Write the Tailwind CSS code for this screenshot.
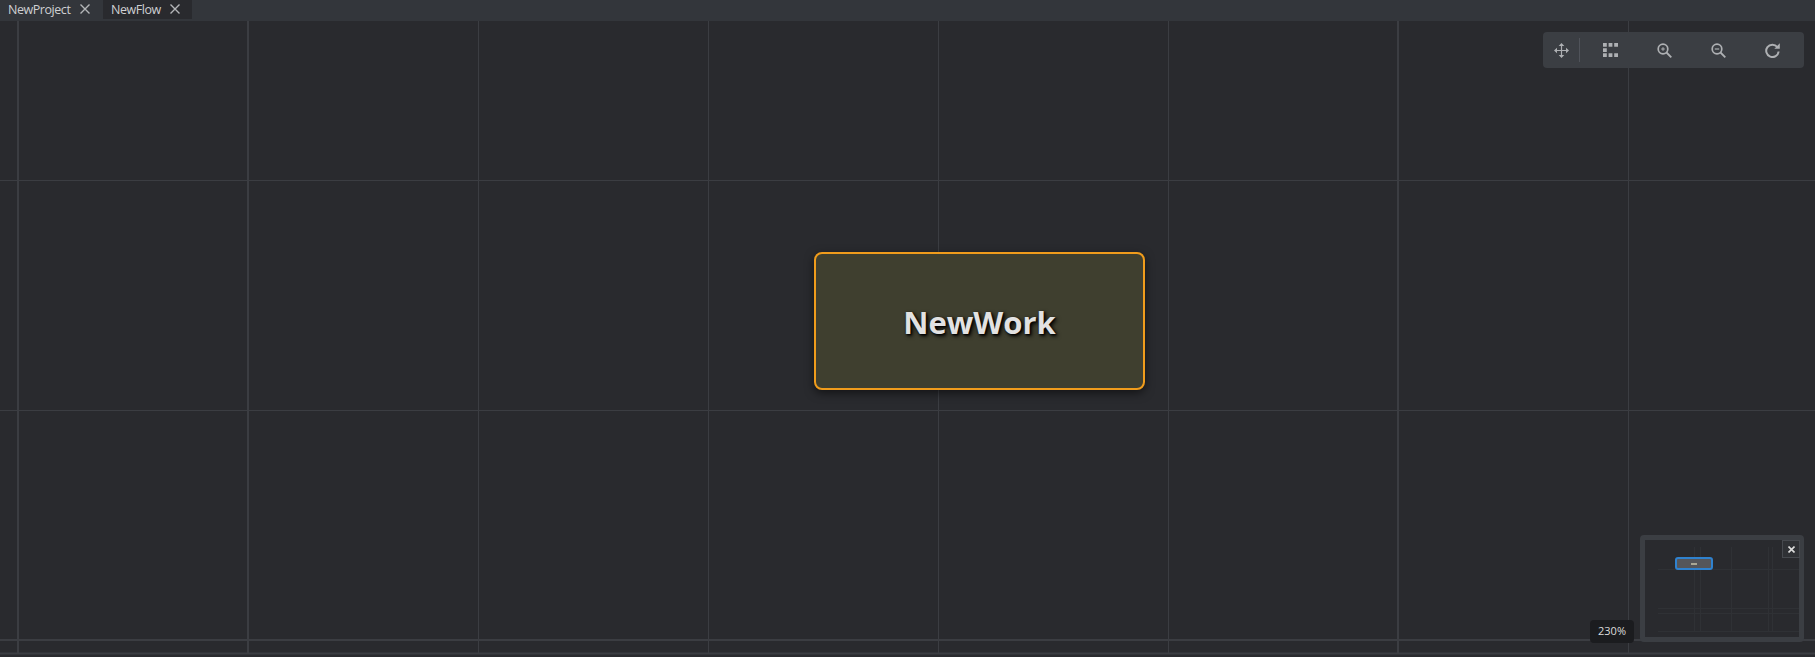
<!DOCTYPE html>
<html lang="en">
<head>
    <meta charset="UTF-8">
    <title>NewFlow</title>
    <script src="https://cdn.jsdelivr.net/npm/@tailwindcss/browser@4"></script>
</head>
<body class="bg-[#292a2e] h-[657px] overflow-hidden flex flex-col font-['Open_Sans','Noto_Sans',sans-serif]">
    <!-- Tabs -->
    <div class="h-[21px] bg-[#33363b] flex shrink-0 text-[#cfd0d2] text-[12.5px] tracking-[-0.45px] leading-[17px]">
        <div class="w-[103px] h-[19px] flex items-center justify-between pl-2 pr-[13px]">
            <span>NewProject</span>
            <svg class="w-[10px] h-[10px] mb-[2px]" viewBox="0 0 10 10" fill="none" stroke="#b4b6b8" stroke-width="1.4"><path d="M.5.5l9 9M9.500.5l-9 9"/></svg>
        </div>
        <div class="w-[89px] h-[19px] bg-[#292a2e] flex items-center justify-between pl-2 pr-3">
            <span>NewFlow</span>
            <svg class="w-[10px] h-[10px] mb-[2px]" viewBox="0 0 10 10" fill="none" stroke="#b4b6b8" stroke-width="1.4"><path d="M.5.5l9 9M9.500.5l-9 9"/></svg>
        </div>
    </div>

    <!-- Canvas -->
    <div class="relative flex-1 overflow-hidden">
        <svg class="absolute left-0 top-0" width="1815" height="636" fill="none" stroke="#3b3d42">
            <g stroke-width="1">
                <path d="M478.500 0V632M708.500 0V632M938.500 0V632M1168.500 0V632M1628.500 0V632M0 159.500H1815M0 389.500H1815"/>
            </g>
            <g stroke-width="2">
                <path d="M18 0V632M248 0V632M1398 0V632M0 619H1815M0 632.500H1815"/>
            </g>
        </svg>

        <!-- Node -->
        <div class="absolute left-[814px] top-[231px] w-[331px] h-[138px] rounded-[8px] border-2 border-[#f09c1c] bg-[#3f3f2f] shadow-[0_3px_10px_rgba(0,0,0,0.55)] flex items-center justify-center">
            <span class="text-[31px] leading-none font-bold mt-[2px] text-[#e2e2e2] [text-shadow:2px_2px_4px_#000,1px_1px_2px_#000]">NewWork</span>
        </div>

        <!-- Toolbar -->
        <div class="absolute left-[1543px] top-[11px] w-[261px] h-[36px] rounded-[4px] bg-[#3b3e43] flex items-center">
            <div class="w-[36px] flex justify-center">
                <svg class="w-[15px] h-[15px]" viewBox="0 0 15 15" fill="#aeb0b3"><path d="M7.500 0l2.800 3H8.100v3.900H12V4.700L15 7.500l-3 2.800V8.100H8.100V12h2.200l-2.800 3-2.800-3h2.200V8.100H3v2.200L0 7.500l3-2.800v2.200h3.900V3H4.700z"/></svg>
            </div>
            <div class="w-px h-[24px] bg-[#50535a]"></div>
            <div class="w-[53px] ml-[4px] flex justify-center">
                <svg class="w-[15px] h-[14px]" viewBox="0 0 15 14" fill="#aeb0b3"><path d="M0 0h3.800v3.800H0zM5.600 0h3.800v3.800H5.600zM11.200 0H15v3.800h-3.800zM0 5.200h3.800V9H0zM0 10.200h3.800V14H0zM5.600 10.200h3.800V14H5.600zM11.200 10.200H15V14h-3.800z"/></svg>
            </div>
            <div class="w-[54px] flex justify-center">
                <svg class="w-[15px] h-[15px]" viewBox="0 0 15 15" fill="none" stroke="#aeb0b3" stroke-width="1.700"><circle cx="6" cy="6" r="4.800"/><path d="M9.500 9.500L14.300 14.300" stroke-width="1.800"/><path d="M4.200 6h3.600M6 4.200v3.600" stroke-width="1"/></svg>
            </div>
            <div class="w-[54px] flex justify-center">
                <svg class="w-[15px] h-[15px]" viewBox="0 0 15 15" fill="none" stroke="#aeb0b3" stroke-width="1.700"><circle cx="6" cy="6" r="4.800"/><path d="M9.500 9.500L14.300 14.300" stroke-width="1.800"/><path d="M3.800 6h4.400" stroke-width="1.200"/></svg>
            </div>
            <div class="w-[54px] flex justify-center">
                <svg class="w-[15px] h-[15px]" viewBox="0 0 15 15" fill="none" stroke="#aeb0b3" stroke-width="2"><path d="M12.300 4A6.200 6.200 0 1 0 13.600 8.500"/><path d="M14.800 0.300v5.500h-5.500z" fill="#aeb0b3" stroke="none"/></svg>
            </div>
        </div>

        <!-- Minimap -->
        <div class="absolute left-[1640px] top-[514px] w-[164px] h-[107px] rounded-[4px] border-[5px] border-[#3b3e43] bg-[#292a2e]">
            <svg class="absolute left-[13px] top-[7px]" width="141" height="85" fill="none" stroke="#2f3135"><path d="M36.500 0V85M42.500 0V85M73.500 0V85M110.500 0V85M114.500 0V85M0 22.500H141M0 61.500H141M0 66.500H141M0 84.500H141"/></svg>
            <div class="absolute left-[30px] top-[17px] w-[38px] h-[13px] rounded-[3px] border-2 border-[#2f82cf] bg-[#55565a] flex items-center justify-center">
                <div class="w-[6px] h-[2px] bg-[#a9a794]"></div>
            </div>
            <div class="absolute right-[-1px] top-0 w-[18px] h-[18px] bg-[#2f3135] border border-[#46494e] flex items-center justify-center">
                <svg class="w-[7px] h-[7px]" viewBox="0 0 7 7" fill="none" stroke="#dcdcdc" stroke-width="1.600"><path d="M.5.5l6 6M6.500.5l-6 6"/></svg>
            </div>
        </div>

        <!-- Zoom level -->
        <div class="absolute left-[1590px] top-[599px] w-[44px] h-[23px] rounded-[4px] bg-[#1b1c1f] text-[#dcdcdc] text-[11px] flex items-center justify-center">230%</div>
    </div>
</body>
</html>
